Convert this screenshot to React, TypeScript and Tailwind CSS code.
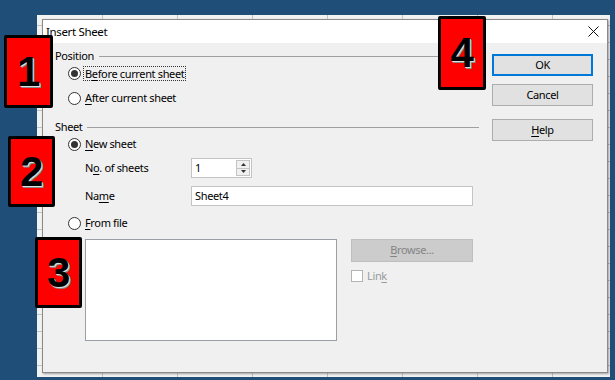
import React from "react";

function Mn({ children }: { children: React.ReactNode }) {
  return <span className="underline decoration-1 underline-offset-[2px]">{children}</span>;
}

function Radio({ checked }: { checked?: boolean }) {
  return (
    <span className="flex h-[13px] w-[13px] shrink-0 items-center justify-center rounded-full border border-[#333333] bg-white">
      {checked && <span className="h-[7px] w-[7px] rounded-full bg-[#333333]" />}
    </span>
  );
}

function SectionHeader({ label }: { label: string }) {
  return (
    <div className="flex h-[16px] items-center">
      <span>{label}</span>
      <span className="ml-[5px] h-0 flex-1 border-t border-[#a0a0a0]" />
    </div>
  );
}

function Button({ children, focused }: { children: React.ReactNode; focused?: boolean }) {
  return (
    <div
      className={`flex h-[22px] w-[101px] items-center justify-center bg-[#e1e1e1] ${
        focused ? "border-2 border-[#0078d7]" : "border border-[#adadad]"
      }`}
    >
      {children}
    </div>
  );
}

function Marker({ n, className }: { n: string; className: string }) {
  return (
    <div
      className={`absolute flex items-center justify-center rounded-[2px] border-[3px] border-black bg-[#ff0000] font-['Liberation_Sans',Arial,sans-serif] text-[42px] font-bold leading-none text-black [text-shadow:1px_1px_0_#e0e0e0,2px_2px_0_#8a8a8a] ${className}`}
    >
      {n}
    </div>
  );
}

export default function App() {
  return (
    <div className="relative h-[380px] w-[615px] overflow-hidden bg-[#1f4e79] pl-[37px] pt-[15px] font-['Noto_Sans',sans-serif] text-[11px] tracking-[-0.35px] text-black">
      {/* spreadsheet behind the dialog */}
      <div className="h-[362px] w-[573px] bg-[#f2f2f2] bg-[linear-gradient(to_right,#c4c4c4_1px,transparent_1px),linear-gradient(to_bottom,#c4c4c4_1px,transparent_1px)] bg-size-[75px_17px] bg-position-[65px_10px] pl-[5px] pt-[4px]">
        <div className="flex h-[354px] w-[566px] flex-col border border-[#8a8a8a] bg-[#f0f0f0] shadow-[1px_1px_2px_rgba(0,0,0,0.35)]">
          {/* title bar */}
          <div className="flex h-[23px] items-center justify-between bg-white pl-[3px] pr-[8px] text-[11.5px]">
            <span>Insert Sheet</span>
            <svg width="11" height="11" viewBox="0 0 11 11">
              <path d="M0.5 0.5 L10.5 10.5 M10.5 0.5 L0.5 10.5" stroke="#111" strokeWidth="1" />
            </svg>
          </div>

          {/* body */}
          <div className="flex pl-[12px]">
            <div className="flex w-[424px] flex-col pt-[5px]">
              <SectionHeader label="Position" />
              <div className="flex h-[18px] items-center pl-[13px]">
                <Radio checked />
                <span className="ml-[2px] border border-dotted border-[#333333] px-[1px] leading-[13px]">
                  B<Mn>e</Mn>fore current sheet
                </span>
              </div>
              <div className="mt-[7px] flex h-[18px] items-center pl-[13px]">
                <Radio />
                <span className="ml-[4px]">
                  <Mn>A</Mn>fter current sheet
                </span>
              </div>

              <div className="mt-[12px]">
                <SectionHeader label="Sheet" />
              </div>
              <div className="flex h-[18px] items-center pl-[13px]">
                <Radio checked />
                <span className="ml-[4px]">
                  <Mn>N</Mn>ew sheet
                </span>
              </div>
              <div className="mt-[5px] flex h-[20px] items-center pl-[30px]">
                <span className="w-[106px]">
                  N<Mn>o</Mn>. of sheets
                </span>
                <div className="flex h-[20px] w-[61px] items-center justify-between border border-[#c4c4c4] bg-white pl-[3px] pr-[1px]">
                  <span>1</span>
                  <div className="flex h-[16px] w-[14px] flex-col border border-[#c4c4c4] bg-[#f0f0f0]">
                    <div className="flex flex-1 items-center justify-center border-b border-[#c4c4c4]">
                      <svg width="5" height="3" viewBox="0 0 5 3">
                        <path d="M2.5 0 L5 3 L0 3 Z" fill="#333" />
                      </svg>
                    </div>
                    <div className="flex flex-1 items-center justify-center">
                      <svg width="5" height="3" viewBox="0 0 5 3">
                        <path d="M0 0 L5 0 L2.5 3 Z" fill="#333" />
                      </svg>
                    </div>
                  </div>
                </div>
              </div>
              <div className="mt-[8px] flex h-[20px] items-center pl-[30px]">
                <span className="w-[106px]">
                  Na<Mn>m</Mn>e
                </span>
                <div className="flex h-[20px] w-[282px] items-center border border-[#c4c4c4] bg-white pl-[3px]">
                  Sheet4
                </div>
              </div>
              <div className="mt-[8px] flex h-[18px] items-center pl-[13px]">
                <Radio />
                <span className="ml-[4px]">
                  <Mn>F</Mn>rom file
                </span>
              </div>
              <div className="mt-[7px] flex pl-[30px]">
                <div className="h-[102px] w-[252px] border border-[#9a9ea6] bg-white" />
                <div className="ml-[14px] flex flex-col">
                  <div className="flex h-[23px] w-[122px] items-center justify-center border border-[#bfbfbf] bg-[#cccccc] text-[#848484]">
                    <Mn>B</Mn>rowse...
                  </div>
                  <div className="mt-[8px] flex h-[12px] items-center">
                    <span className="h-[12px] w-[12px] border border-[#b4b4b4] bg-white" />
                    <span className="ml-[4px] text-[#9a9a9a]">
                      Lin<Mn>k</Mn>
                    </span>
                  </div>
                </div>
              </div>
            </div>

            <div className="ml-[13px] flex flex-col pt-[11px]">
              <Button focused>OK</Button>
              <div className="mt-[8px]">
                <Button>Cancel</Button>
              </div>
              <div className="mt-[13px]">
                <Button>
                  <span>
                    <Mn>H</Mn>elp
                  </span>
                </Button>
              </div>
            </div>
          </div>
        </div>
      </div>

      <Marker n="1" className="left-[4px] top-[35px] h-[73px] w-[49px]" />
      <Marker n="2" className="left-[8px] top-[136px] h-[71px] w-[47px]" />
      <Marker n="3" className="left-[35px] top-[237px] h-[71px] w-[47px]" />
      <Marker n="4" className="left-[438px] top-[16px] h-[74px] w-[48px]" />
    </div>
  );
}
